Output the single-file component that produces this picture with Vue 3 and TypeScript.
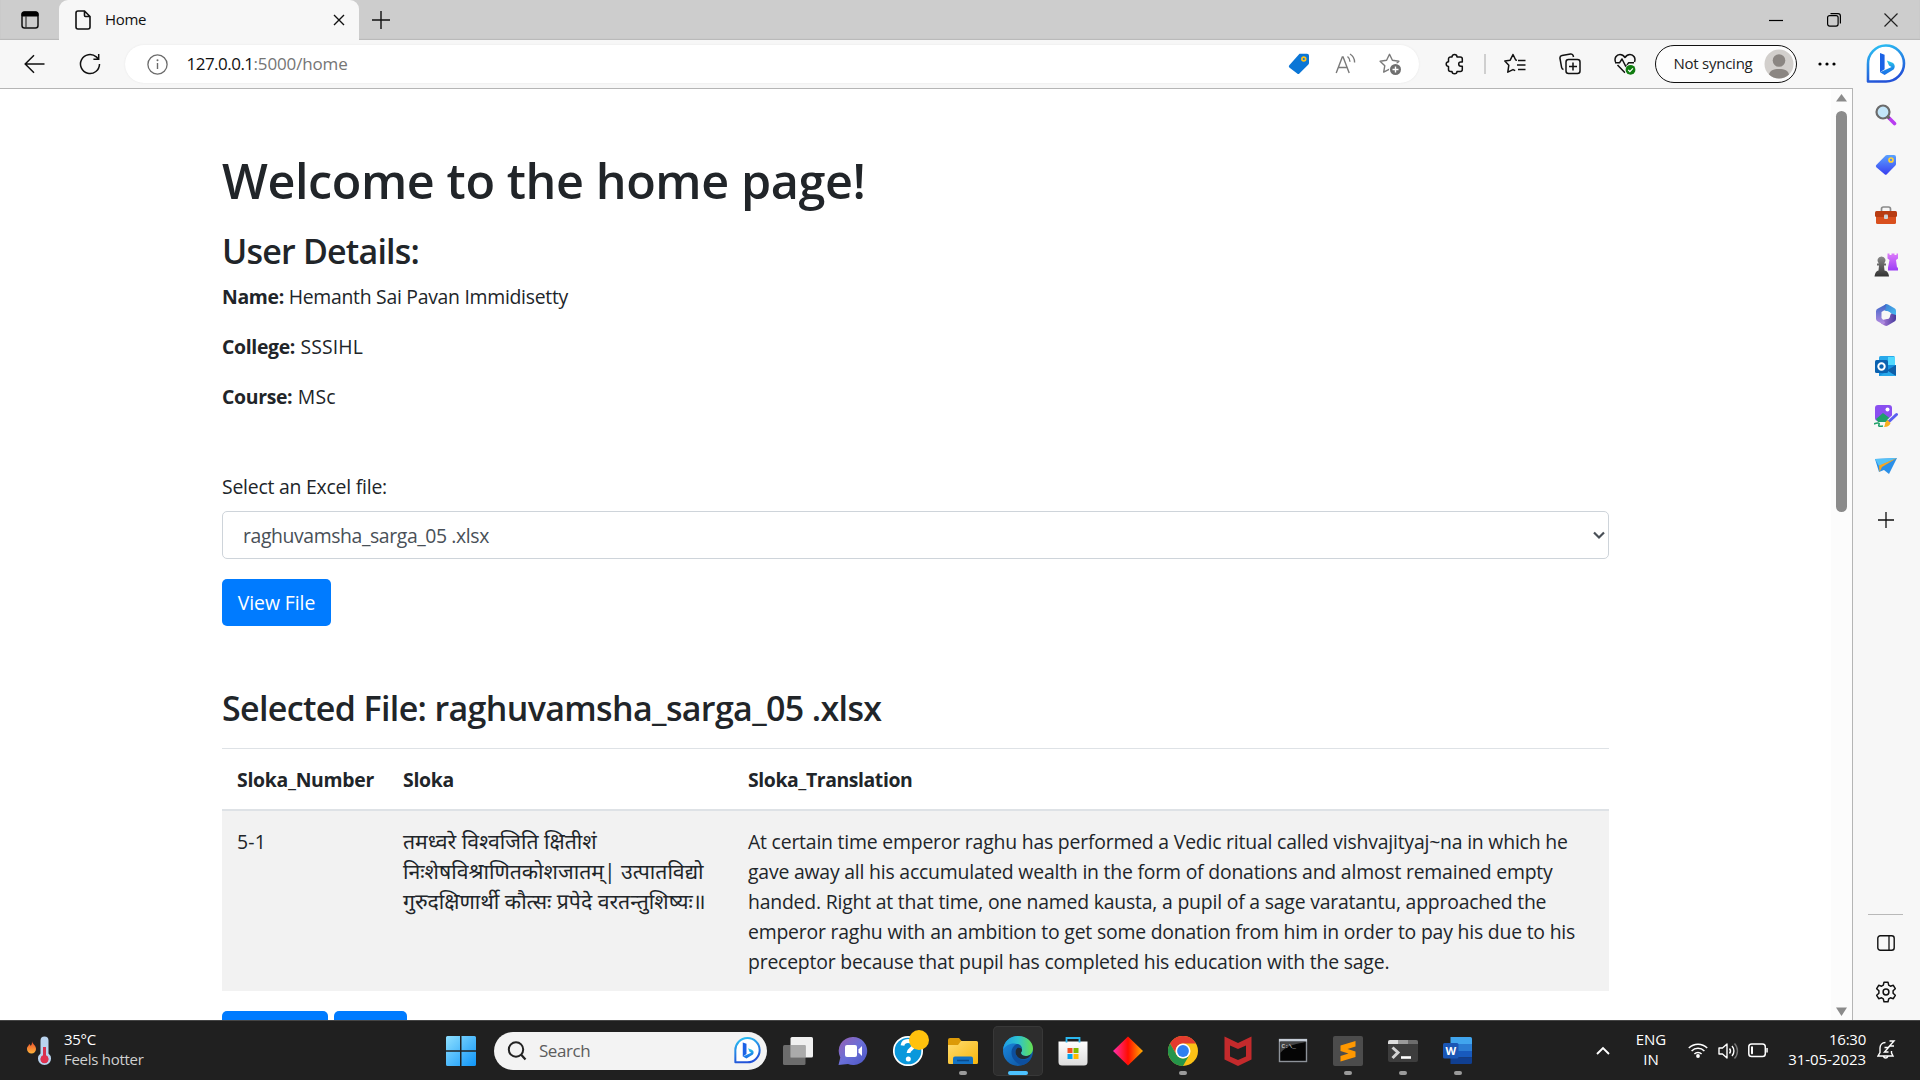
<script setup lang="ts">
interface Detail {
  label: string
  value: string
  cls?: string
}

const details: Detail[] = [
  { label: 'Name:', value: 'Hemanth Sai Pavan Immidisetty' },
  { label: 'College:', value: 'SSSIHL', cls: 'loose' },
  { label: 'Course:', value: 'MSc', cls: 'loose' },
]

const fileName = 'raghuvamsha_sarga_05 .xlsx'

const sloka: string[] = [
  'तमध्वरे विश्वजिति क्षितीशं',
  'निःशेषविश्राणितकोशजातम्| उत्पातविद्यो',
  'गुरुदक्षिणार्थी कौत्सः प्रपेदे वरतन्तुशिष्यः॥',
]

const translation: string[] = [
  'At certain time emperor raghu has performed a Vedic ritual called vishvajityaj~na in which he',
  'gave away all his accumulated wealth in the form of donations and almost remained empty',
  'handed. Right at that time, one named kausta, a pupil of a sage varatantu, approached the',
  'emperor raghu with an ambition to get some donation from him in order to pay his due to his',
  'preceptor because that pupil has completed his education with the sage.',
]
</script>

<template>
  <div class="desktop">
    <svg width="0" height="0" class="defs">
      <defs>
        <linearGradient id="gBing" x1="0" y1="0" x2="0.3" y2="1"><stop offset="0" stop-color="#2bc5f4" /><stop offset="1" stop-color="#2353d8" /></linearGradient>
        <linearGradient id="gB" x1="0" y1="0" x2="0" y2="1"><stop offset="0" stop-color="#2fd0e8" /><stop offset=".5" stop-color="#1d8fe8" /><stop offset="1" stop-color="#1b6fe8" /></linearGradient>
        <linearGradient id="gWin" x1="0" y1="0" x2="1" y2="1"><stop offset="0" stop-color="#8fe0ff" /><stop offset="1" stop-color="#0f95f8" /></linearGradient>
        <linearGradient id="gTag" x1="0" y1="0" x2="0" y2="1"><stop offset="0" stop-color="#5aa2ff" /><stop offset="1" stop-color="#3a3ff0" /></linearGradient>
        <linearGradient id="gRook" x1="0" y1="0" x2="0" y2="1"><stop offset="0" stop-color="#dd7bfa" /><stop offset="1" stop-color="#9b3df5" /></linearGradient>
        <linearGradient id="gPawn" x1="0" y1="0" x2="0" y2="1"><stop offset="0" stop-color="#8a8a8a" /><stop offset="1" stop-color="#333" /></linearGradient>
        <linearGradient id="gChat" x1="0" y1="0" x2="1" y2="1"><stop offset="0" stop-color="#9a5fb0" /><stop offset=".5" stop-color="#6a6fd8" /><stop offset="1" stop-color="#4b55c4" /></linearGradient>
        <linearGradient id="gFolder" x1="0" y1="0" x2="1" y2="1"><stop offset="0" stop-color="#ffdc70" /><stop offset="1" stop-color="#f8b60c" /></linearGradient>
        <linearGradient id="gEdgeTop" x1="0" y1="0" x2="1" y2="0"><stop offset="0" stop-color="#1f9be6" /><stop offset=".5" stop-color="#2dc3cf" /><stop offset="1" stop-color="#66e04e" /></linearGradient>
        <linearGradient id="gEdgeLow" x1="0" y1="0" x2="1" y2="1"><stop offset="0" stop-color="#1c8fe6" /><stop offset="1" stop-color="#0c4a94" /></linearGradient>
        <linearGradient id="gDia" x1="0" y1="0" x2="1" y2="0"><stop offset="0" stop-color="#ff2fb0" /><stop offset=".5" stop-color="#ff0d00" /><stop offset="1" stop-color="#ffae00" /></linearGradient>
        <linearGradient id="gStore" x1="0" y1="0" x2="0" y2="1"><stop offset="0" stop-color="#fff" /><stop offset="1" stop-color="#dcdcdc" /></linearGradient>
        <linearGradient id="gFlame" x1="0" y1="0" x2="0" y2="1"><stop offset="0" stop-color="#e8452c" /><stop offset="1" stop-color="#ffb43a" /></linearGradient>
        <linearGradient id="gM1" x1="0" y1="0" x2="0" y2="1"><stop offset="0" stop-color="#3a66c8" /><stop offset="1" stop-color="#b58be0" /></linearGradient>
        <linearGradient id="gM2" x1="0" y1="0" x2="1" y2="1"><stop offset="0" stop-color="#3c78d0" /><stop offset="1" stop-color="#48c2f4" /></linearGradient>
        <linearGradient id="gM3" x1="0" y1="0" x2="1" y2="0"><stop offset="0" stop-color="#b07fdc" /><stop offset="1" stop-color="#463a9c" /></linearGradient>
      </defs>
    </svg>

    <header class="tabstrip">
      <svg class="workspaces" width="18" height="18" viewBox="0 0 18 18"><rect x="1" y="1" width="16" height="16" rx="2.5" fill="none" stroke="#111" stroke-width="1.5" /><path d="M1 5V3a2 2 0 0 1 2-2h12a2 2 0 0 1 2 2v2z" fill="#000" stroke="#000" /><path d="M5 5v12" stroke="#333" stroke-width="1.2" /></svg>
      <div class="tab">
        <svg width="16" height="20" viewBox="0 0 16 20"><path d="M3 1h6.500l5.500 5.500V17a2 2 0 0 1-2 2H3a2 2 0 0 1-2-2V3a2 2 0 0 1 2-2zM9.500 1v4.500a1 1 0 0 0 1 1H15" fill="none" stroke="#111" stroke-width="1.600" /></svg>
        <span class="tab-title">Home</span>
        <svg width="12" height="12" viewBox="0 0 12 12"><path d="M1 1l10 10M11 1L1 11" stroke="#111" stroke-width="1.400" /></svg>
      </div>
      <svg class="newtab" width="18" height="18" viewBox="0 0 18 18"><path d="M9 0v18M0 9h18" stroke="#111" stroke-width="1.400" /></svg>
      <div class="window-controls">
        <svg width="14" height="14" viewBox="0 0 14 14"><path d="M0 7.500h14" stroke="#000" stroke-width="1.200" /></svg>
        <svg width="14" height="14" viewBox="0 0 14 14"><rect x=".6" y="2.600" width="10.500" height="10.500" rx="2" fill="none" stroke="#000" stroke-width="1.200" /><path d="M3.500.600H11a2.400 2.400 0 0 1 2.400 2.400v7.500" fill="none" stroke="#000" stroke-width="1.200" /></svg>
        <svg width="14" height="14" viewBox="0 0 14 14"><path d="M.5.500l13 13M13.500.500l-13 13" stroke="#222" stroke-width="1.200" /></svg>
      </div>
    </header>

    <nav class="toolbar">
      <svg class="back" width="21" height="20" viewBox="0 0 21 20"><path d="M20.500 10H1.500M10 1.200L1.200 10l8.800 8.800" fill="none" stroke="#111" stroke-width="1.500" /></svg>
      <svg class="reload" width="22" height="22" viewBox="0 0 22 22"><path d="M20.500 11a9.500 9.500 0 1 1-3.200-7.100L19.500 6M19.700 1v5.300h-5.300" fill="none" stroke="#111" stroke-width="1.500" /></svg>
      <div class="address">
        <svg width="21" height="21" viewBox="0 0 21 21"><circle cx="10.500" cy="10.500" r="9.600" fill="none" stroke="#6b6b6b" stroke-width="1.300" /><path d="M10.500 9v6" stroke="#6b6b6b" stroke-width="1.400" /><circle cx="10.500" cy="6.300" r="1" fill="#6b6b6b" /></svg>
        <span class="url"><span class="host">127.0.0.1</span><span class="path">:5000/home</span></span>
        <svg width="22" height="22" viewBox="0 0 22 22"><path d="M11.500.800H19a2 2 0 0 1 2 2V10a2 2 0 0 1-.6 1.400l-9 9a1.600 1.600 0 0 1-2.200 0L1.300 14.500a1.600 1.600 0 0 1 0-2.200z" fill="#0b76d6" /><circle cx="15.800" cy="6" r="1.900" fill="#0b76d6" stroke="#ffc21a" stroke-width="1.700" /></svg>
        <svg class="read" width="22" height="22" viewBox="0 0 22 22"><path d="M1.200 20L7.300 4h.8l6.100 16M3.400 14.500h8.700M12.500 3.500c1.600 1.200 2.500 2.900 2.500 5.200M15 1c2.900 1.700 4.600 4.600 4.600 8.500" fill="none" stroke="#7a7a7a" stroke-width="1.400" /></svg>
        <svg class="star" width="23" height="23" viewBox="0 0 23 23"><path d="M10.500 1.300l2.900 6 6.500.9-4.700 4.500 1.100 6.400-5.800-3-5.800 3 1.100-6.400L1.100 8.200l6.500-.9z" fill="none" stroke="#7a7a7a" stroke-width="1.400" stroke-linejoin="round" /><circle cx="16.500" cy="16.500" r="6.500" fill="#fff" /><circle cx="16.500" cy="16.500" r="5.500" fill="#6f6f6f" /><path d="M16.500 13.500v6M13.500 16.500h6" stroke="#fff" stroke-width="1.400" /></svg>
      </div>
      <svg class="ext" width="20" height="22" viewBox="0 0 20 22"><path d="M7 4C7 2.300 8.200 1.500 9.500 1.500S12 2.300 12 4h3.300a2 2 0 0 1 2 2v3h-1.500a2 2 0 0 0 0 4.200h1.500v3.300a2 2 0 0 1-2 2H12c0 1.500-1.200 2.300-2.500 2.300S7 20 7 18.500H5.500a2 2 0 0 1-2-2v-3C2.200 13.400 1.200 12.400 1.200 11.100s1-2.200 2.300-2.300V6a2 2 0 0 1 2-2z" fill="none" stroke="#111" stroke-width="1.500" stroke-linejoin="round" /></svg>
      <i class="divider"></i>
      <svg class="favs" width="22" height="22" viewBox="0 0 22 22"><path d="M13 7.200l-1.300-.2L9 1.500 6.200 7.200l-5.400.8 4 4.300-1 6.900L9 16.600l2.200 1.100M14 7.500h7.500M13 12h8.500M14 16.500h7.500" fill="none" stroke="#111" stroke-width="1.500" stroke-linejoin="round" /></svg>
      <svg class="coll" width="22" height="22" viewBox="0 0 22 22"><rect x="7" y="6.500" width="14" height="14" rx="2.500" fill="none" stroke="#111" stroke-width="1.500" /><path d="M14 9.500v8M10 13.500h8M4.500 16.500a2.600 2.600 0 0 1-1.900-2.100L1 5.500a2.500 2.500 0 0 1 2-2.900l8.500-1.500A2.500 2.500 0 0 1 14.300 3l.2 1" fill="none" stroke="#111" stroke-width="1.500" /></svg>
      <svg class="heart" width="22" height="22" viewBox="0 0 22 22"><path d="M1.500 9C0 5 2.500 1.500 6 1.500c2.100 0 3.600 1 5 3 1.400-2 2.900-3 5-3 3.500 0 6 3.500 4.500 7.500M3.500 12l7.500 7.800M1 9.800h4.500L8 6l4 7.800 2.500-4H20" fill="none" stroke="#111" stroke-width="1.500" stroke-linejoin="round" /><circle cx="16.500" cy="16.800" r="5.800" fill="#f7f7f7" /><circle cx="16.500" cy="16.800" r="4.900" fill="#107c10" /><path d="M14.200 16.900l1.700 1.700 3-3.200" fill="none" stroke="#fff" stroke-width="1.300" /></svg>
      <div class="profile">
        <span>Not syncing</span>
        <svg width="30" height="30" viewBox="0 0 30 30"><circle cx="15" cy="15" r="14.500" fill="#d2cfcc" /><circle cx="15" cy="11.500" r="6.300" fill="#8b8682" /><path d="M5 25.500C6 21.500 9 20 15 20s9 1.500 10 5.500A14.500 14.500 0 0 1 5 25.500z" fill="#8b8682" /></svg>
      </div>
      <svg class="dots" width="18" height="4" viewBox="0 0 18 4"><circle cx="2" cy="2" r="1.600" /><circle cx="9" cy="2" r="1.600" /><circle cx="16" cy="2" r="1.600" /></svg>
      <svg class="bing" width="40" height="40" viewBox="0 0 40 40"><path d="M2 37.500V20A18 18 0 1 1 20 37.500z" fill="#fff" stroke="url(#gBing)" stroke-width="2.600" stroke-linejoin="round" /><path d="M14 9l4.600 1.700v14.600l-4.600 3z" fill="#1b62e6" /><path d="M14 28.300l4.600 2.600 9-5.300c2-2.400 1.400-5.600-1.600-7l-5.200-2.200 2.200 5.200 2.600 1.300z" fill="url(#gB)" /></svg>
    </nav>

    <div class="body">
      <main class="page">
        <div class="container">
          <h1>Welcome to the home page!</h1>
          <h3 class="details-title">User Details:</h3>
          <p v-for="d in details" :key="d.label"><strong>{{ d.label }}</strong> <span class="val" :class="d.cls">{{ d.value }}</span></p>
          <div class="field-label">Select an Excel file:</div>
          <div class="select">
            <span>{{ fileName }}</span>
            <svg width="12" height="9" viewBox="0 0 12 9"><path d="M1 1.500l5 5 5-5" fill="none" stroke="#495057" stroke-width="2.200" /></svg>
          </div>
          <button class="btn">View File</button>
          <h3 class="selected-title">Selected File: {{ fileName }}</h3>
          <div class="table">
            <div class="row head">
              <span class="c1">Sloka_Number</span><span class="c2">Sloka</span><span class="c3 tr">Sloka_Translation</span>
            </div>
            <div class="row data">
              <span class="c1 num">5-1</span>
              <div class="c2 hindi"><div v-for="l in sloka" :key="l">{{ l }}</div></div>
              <div class="c3"><div v-for="l in translation" :key="l">{{ l }}</div></div>
            </div>
          </div>
          <div class="pager"><i class="p1"></i><i class="p2"></i></div>
        </div>
        <div class="scrollbar">
          <svg width="11" height="8" viewBox="0 0 11 8"><path d="M5.500 0L11 7.500H0z" fill="#8b8b8b" /></svg>
          <i class="thumb"></i>
          <svg class="down" width="11" height="9" viewBox="0 0 11 9"><path d="M0 .500h11L5.500 9z" fill="#8b8b8b" /></svg>
        </div>
      </main>

      <aside class="sidebar">
        <div class="s"><svg width="22" height="22" viewBox="0 0 22 22"><path d="M13.500 13.500l6 6" stroke="#b83df0" stroke-width="3.600" stroke-linecap="round" /><path d="M12.500 12.500l2 2" stroke="#666" stroke-width="2.500" /><circle cx="8" cy="8" r="6.500" fill="#c3e6fa" stroke="#6b6b6b" stroke-width="2.200" /></svg></div>
        <div class="s"><svg width="22" height="22" viewBox="0 0 22 22"><path d="M12 1h7a2 2 0 0 1 2 2v7a2 2 0 0 1-.6 1.400l-8.600 8.800a1.600 1.600 0 0 1-2.200 0L1.300 13.200a1.600 1.600 0 0 1 0-2.200L10.600 1.600A2 2 0 0 1 12 1z" fill="url(#gTag)" /><circle cx="16" cy="6" r="2" fill="#4f86ff" stroke="#ffd335" stroke-width="1.700" /></svg></div>
        <div class="s"><svg width="24" height="22" viewBox="0 0 24 22"><path d="M7.500 8V5a2 2 0 0 1 2-2h5a2 2 0 0 1 2 2v3" fill="none" stroke="#8a8a8a" stroke-width="1.700" /><rect x="2" y="9" width="20" height="11" rx="1.500" fill="#d9501e" /><rect x="1" y="7" width="22" height="6" rx="1.500" fill="#b83c12" /><rect x="10" y="10.500" width="4" height="4.500" rx="1" fill="#ccd2d6" /></svg></div>
        <div class="s"><svg width="24" height="24" viewBox="0 0 24 24"><path d="M13.500.500h2v1.500h2V.500h3v1.500h2V.500h1.500v5l-2 1.500 1 7.500h1v3h-10v-3l1.500-7.500-2-1.500z" fill="url(#gRook)" /><path d="M7.500 3.500a4 4 0 0 1 2.700 7H12v2h-2l.5 5c2.500.500 4 2 4.500 6H.500c.5-4 2-5.500 4-6l.5-5H3v-2h1.800a4 4 0 0 1 2.700-7z" fill="url(#gPawn)" /></svg></div>
        <div class="s"><svg width="22" height="22" viewBox="0 0 22 22"><path d="M10.500.300a3 3 0 0 1 2.500.2l6.500 3.700A3 3 0 0 1 21 6.800V13l-6.500-5-5-1.500L8 3z" fill="url(#gM2)" /><path d="M21 11v4a3 3 0 0 1-1.500 2.600l-6.800 3.900a3 3 0 0 1-3 0L6 19.500l1.500-3.500L14 14.500 16 9.500z" fill="url(#gM3)" /><path d="M11 .200L3 4.500A3 3 0 0 0 1 7.200v7.500a3 3 0 0 0 1.500 2.600L7 19.800c1.500.6 3 0 3-1.500L6.500 14V8l4-2.500z" fill="url(#gM1)" /><circle cx="11" cy="11" r="4" fill="#f7f7f7" /></svg></div>
        <div class="s"><svg width="22" height="22" viewBox="0 0 22 22"><rect x="4" y="1" width="16" height="10" rx="1.500" fill="#28a8ea" /><path d="M13 2h7v8h-7z" fill="#50d9ff" /><path d="M4 10h17v9.500a1.500 1.500 0 0 1-1.500 1.500H4z" fill="#1490df" /><path d="M21 10l-10 6 10 5z" fill="#0f5fa8" /><path d="M4 21l17 0-8-5z" fill="#28a8ea" /><rect x="0" y="5" width="13" height="13" rx="1.500" fill="#0a62b0" /><circle cx="6.500" cy="11.500" r="3.200" fill="none" stroke="#fff" stroke-width="2" /></svg></div>
        <div class="s"><svg width="24" height="24" viewBox="0 0 24 24"><rect x="1" y="1" width="17" height="16" rx="3" fill="#8a4ff0" /><path d="M2 15l7-6 9 7-3 2H4z" fill="#1fa06a" /><circle cx="13.500" cy="5.500" r="2" fill="#fff" /><path d="M22.500 10.500l-7.500 7" stroke="#f7f7f7" stroke-width="5" /><path d="M22.500 10.500l-7.500 7" stroke="#5b5ff0" stroke-width="3" stroke-linecap="round" /><path d="M13.500 16l3 3c-1 3.500-4 4-6.500 4 1.500-2 .5-5.500 3.500-7z" fill="#f8b020" /><path d="M0 20c3-1.500 6-1.500 5 .5s1 2 4 1.500" fill="none" stroke="#1fa06a" stroke-width="1.600" /></svg></div>
        <div class="s"><svg width="24" height="20" viewBox="0 0 24 20"><path d="M1 3l22-1-8 16-5-4-5 2z" fill="#2b8fe8" /><path d="M1 3l22-1L5 10z" fill="#57c2f7" /><path d="M5 9.500L23 2 8 11l-2.500 5z" fill="#f5a623" /></svg></div>
        <div class="s plus"><svg width="16" height="16" viewBox="0 0 16 16"><path d="M8 0v16M0 8h16" stroke="#111" stroke-width="1.300" /></svg></div>
        <div class="s-bottom">
          <i class="s-line"></i>
          <svg class="panel" width="18" height="16" viewBox="0 0 18 16"><rect x=".8" y=".8" width="16.400" height="14.400" rx="2.500" fill="none" stroke="#111" stroke-width="1.400" /><path d="M12 1v14" stroke="#111" stroke-width="1.300" /></svg>
          <svg class="gear" width="22" height="22" viewBox="0 0 22 22"><path d="M9 1.200h4l.7 3 1.700 1 2.900-.9 2 3.400-2.200 2.100v2.400l2.200 2.100-2 3.400-2.900-.9-1.700 1-.7 3H9l-.7-3-1.700-1-2.900.9-2-3.400 2.200-2.100V9.800L1.700 7.700l2-3.400 2.900.9 1.700-1z" fill="none" stroke="#111" stroke-width="1.500" stroke-linejoin="round" /><circle cx="11" cy="11" r="2.900" fill="none" stroke="#111" stroke-width="1.500" /></svg>
        </div>
      </aside>
    </div>

    <footer class="taskbar">
      <div class="weather">
        <svg width="26" height="30" viewBox="0 0 26 30"><path d="M6 5c0 3 4 4 4 8a4.500 4.500 0 0 1-9 0c0-3 2-3 2-5 1 .5 1.500 1 1.500 2C6 9 6 7 6 5z" fill="url(#gFlame)" /><path d="M14.500 4.500a4 4 0 0 1 8 0v13a6.500 6.500 0 1 1-8 0z" fill="#b9d3ee" /><path d="M17 11h3v8.500a4 4 0 1 1-3 0z" fill="#d6304d" /><circle cx="18.500" cy="23" r="3.800" fill="#e0314f" /></svg>
        <div class="two"><span>35°C</span><span class="dim">Feels hotter</span></div>
      </div>
      <svg class="start" width="30" height="30" viewBox="0 0 30 30"><path d="M1.500 0H14v14.200H0V1.500A1.500 1.500 0 0 1 1.500 0zM15.500 0h13A1.500 1.500 0 0 1 30 1.500v12.700H15.500zM0 15.700h14V30H1.500A1.500 1.500 0 0 1 0 28.500zM15.500 15.700H30v12.800a1.500 1.500 0 0 1-1.500 1.500h-13z" fill="url(#gWin)" /></svg>
      <div class="search">
        <svg width="20" height="20" viewBox="0 0 20 20"><circle cx="9" cy="8.500" r="7.200" fill="none" stroke="#222" stroke-width="2" /><path d="M14 13.500l4.500 5" stroke="#222" stroke-width="2.200" /></svg>
        <span>Search</span>
        <svg width="27" height="27" viewBox="0 0 40 40"><path d="M2 37.500V20A18 18 0 1 1 20 37.500z" fill="#fff" stroke="url(#gBing)" stroke-width="3" stroke-linejoin="round" /><path d="M13 8l5.500 2v15l-5.500 4z" fill="#1b62e6" /><path d="M13 29l5.500 3 9.500-6c2-2.400 1.400-5.600-1.600-7l-5.600-2.400 2.200 5.400 2.600 1.300z" fill="url(#gB)" /></svg>
      </div>
      <div class="apps">
        <div class="app"><svg width="30" height="30" viewBox="0 0 30 30"><rect x="7.500" y="1" width="22.500" height="20.500" rx="1.500" fill="#f0f0f0" /><rect x="0" y="9" width="22.500" height="20" rx="1.500" fill="#747474" opacity=".9" /><path d="M7.500 9h15v12.500h-15z" fill="#aaa" /></svg></div>
        <div class="app"><svg width="30" height="30" viewBox="0 0 30 30"><path d="M15 1a14 14 0 1 1-5 27L.5 29l1.800-7.500A14 14 0 0 1 15 1z" fill="url(#gChat)" /><rect x="7" y="9" width="12" height="12" rx="2" fill="#fff" /><path d="M20.500 13.500L24 10v10l-3.500-3.500z" fill="#fff" /></svg></div>
        <div class="app"><svg class="help" width="36" height="36" viewBox="0 0 36 36"><circle cx="15" cy="21" r="14.200" fill="#0a98dc" stroke="#fff" stroke-width="1.700" /><path d="M9.500 15.500c.5-3.500 3-4.500 5.500-4.500 3.500 0 5.500 2 5.500 4.500 0 3.500-5 3.700-5 7.500" fill="none" stroke="#fff" stroke-width="3.800" /><circle cx="15.300" cy="29" r="2.500" fill="#fff" /><circle cx="26" cy="10" r="10" fill="#ffc10d" /></svg></div>
        <div class="app"><svg width="30" height="30" viewBox="0 0 30 30"><path d="M0 4a2 2 0 0 1 2-2h9l3 3.500V12H0z" fill="#dc9a08" /><path d="M0 9h10l3-4h15.500A1.500 1.500 0 0 1 30 6.500v20a1.500 1.500 0 0 1-1.500 1.500h-27A1.500 1.500 0 0 1 0 26.500z" fill="url(#gFolder)" /><path d="M5 28v-5.500a2 2 0 0 1 2-2h16a2 2 0 0 1 2 2V28z" fill="#1272c4" /><path d="M9 24.500h12" stroke="#0a4b8c" stroke-width="1.500" /></svg><i class="dot"></i></div>
        <div class="app active"><svg width="30" height="30" viewBox="0 0 30 30"><circle cx="15" cy="15" r="15" fill="url(#gEdgeLow)" /><path d="M0 14C1 5 7 0 15 0c9 0 15 6 15 12.500 0 4.500-3 7.500-7 7.500-3.500 0-5-1.500-5-3 0-1 1-1.500 1-3.500 0-3-3-6-8-6C6 7.500 2 10 0 14z" fill="url(#gEdgeTop)" /><path d="M14 8c-5 2-7.500 9-3.500 15 2 3 5 5.500 9 6 4-1 7-3.500 8.500-6.500-7 3.500-15.500.5-15.500-6.500 0-2 1-3.500 2.500-4.500 3-.5 4 1 4 3 .5-4-2-6.500-5-6.500z" fill="#0d4f9e" /><path d="M15 11.500c2.500 0 4 1 4 2.500 0 1.500-1 2-1 3 0 1.500 1.500 3 5 3 2 0 3.500-.5 5-2-1 3-4 5-8 5-4.500 0-7.500-3.500-7.500-7 0-2 1-3.500 2.500-4.500z" fill="#222b33" /></svg><i class="dot on"></i></div>
        <div class="app"><svg width="30" height="30" viewBox="0 0 30 30"><path d="M.5 5.500h29V26a3.500 3.500 0 0 1-3.500 3.500H4A3.500 3.500 0 0 1 .5 26z" fill="url(#gStore)" /><path d="M8.500 6.500V2h13v4.500" fill="none" stroke="#2bb7ee" stroke-width="1.800" /><path d="M9.500 12h5v5h-5z" fill="#f25022" /><path d="M15.500 12h5v5h-5z" fill="#7fba00" /><path d="M9.500 18h5v5h-5z" fill="#00a4ef" /><path d="M15.500 18h5v5h-5z" fill="#ffb900" /></svg></div>
        <div class="app"><svg width="30" height="30" viewBox="0 0 30 30"><path d="M15 .500L30 15 15 29.500 0 15z" fill="url(#gDia)" /></svg></div>
        <div class="app"><svg width="30" height="30" viewBox="0 0 30 30"><circle cx="15" cy="15" r="15" fill="#fbc116" /><path d="M2 7.500A15 15 0 0 1 28 7.500H15a7.500 7.500 0 0 0-6.500 11.200z" fill="#e33b2e" /><path d="M2 7.500a15 15 0 0 0 13 22.500l6.500-11.200a7.500 7.500 0 0 1-13 0z" fill="#25954a" /><circle cx="15" cy="15" r="7.500" fill="#fff" /><circle cx="15" cy="15" r="5.900" fill="#2f7ff0" /></svg><i class="dot"></i></div>
        <div class="app"><svg width="30" height="30" viewBox="0 0 30 30"><path d="M1.500.500L15 7 28.500.500v23L15 30 1.500 23.500zM7 9.500v11l8 3.500 8-3.500v-11l-8 3.500z" fill="#c42a2c" fill-rule="evenodd" /></svg></div>
        <div class="app"><svg width="30" height="30" viewBox="0 0 30 30"><rect x="1.500" y="3.500" width="27" height="22" fill="#050505" stroke="#8d9299" stroke-width="1.400" /><path d="M1 3h28v2.500H1z" fill="#c5ccd6" /><path d="M2.200 6h25.500C20 8 10 8 2.200 17z" fill="#444" /><text x="3.500" y="11.500" font-size="6" fill="#eee" font-family="Liberation Mono">C:\_</text></svg></div>
        <div class="app"><svg width="30" height="30" viewBox="0 0 30 30"><rect width="30" height="30" rx="2" fill="#4c4c4c" /><path d="M22.500 5v5.500l-8 2.500 8 2.500V21L7.500 25.500V20l8-2.500-8-2.500V9.500z" fill="#ff9800" /></svg><i class="dot"></i></div>
        <div class="app"><svg width="30" height="30" viewBox="0 0 30 30"><rect y="4" width="30" height="22" rx="2" fill="#3d3d3d" /><path d="M0 8V6a2 2 0 0 1 2-2h8v4z" fill="#ddd" /><path d="M10 4h10v4H10z" fill="#9a9a9a" /><path d="M20 4h8a2 2 0 0 1 2 2v2H20z" fill="#6d6d6d" /><path d="M4.500 11.500l5.500 5-5.500 5.500" fill="none" stroke="#d2d2d2" stroke-width="3" /><path d="M13 21.500h10" stroke="#fff" stroke-width="2.600" /></svg><i class="dot"></i></div>
        <div class="app"><svg width="30" height="30" viewBox="0 0 30 30"><path d="M7.500 1h20A1.500 1.500 0 0 1 29 2.500V8H7.500z" fill="#41a5ee" /><path d="M7.500 8H29v7H7.500z" fill="#2b7cd3" /><path d="M7.500 15H29v6.500H7.500z" fill="#185abd" /><path d="M7.500 21.500H29v5a1.500 1.500 0 0 1-1.500 1.500h-20z" fill="#103f91" /><rect x="0" y="7" width="15.500" height="15.500" rx="1.500" fill="#1a56b5" /><text x="7.700" y="18.500" font-size="11" font-weight="700" fill="#fff" text-anchor="middle" font-family="Open Sans">W</text></svg><i class="dot"></i></div>
      </div>
      <div class="tray">
        <svg class="chev" width="14" height="9" viewBox="0 0 14 9"><path d="M1 8l6-6 6 6" fill="none" stroke="#fff" stroke-width="1.900" /></svg>
        <div class="two lang"><span>ENG</span><span>IN</span></div>
        <svg class="wifi" width="20" height="16" viewBox="0 0 20 16"><path d="M.8 6a13 13 0 0 1 18.400 0M3.600 9a9 9 0 0 1 12.800 0M6.400 12a5 5 0 0 1 7.200 0" fill="none" stroke="#fff" stroke-width="1.500" /><circle cx="10" cy="14" r="1.900" fill="#fff" /></svg>
        <svg class="vol" width="21" height="18" viewBox="0 0 21 18"><path d="M1 6h3.500L9 2v14l-4.500-4H1z" fill="none" stroke="#fff" stroke-width="1.400" stroke-linejoin="round" /><path d="M11.500 6.500a4 4 0 0 1 0 5M14 4a7.500 7.500 0 0 1 0 10" fill="none" stroke="#fff" stroke-width="1.400" /><path d="M16.500 1.500a11 11 0 0 1 0 15" fill="none" stroke="#777" stroke-width="1.400" /></svg>
        <svg class="bat" width="21" height="15" viewBox="0 0 21 15"><rect x=".8" y="1" width="16.500" height="12.500" rx="2.800" fill="none" stroke="#fff" stroke-width="1.500" /><path d="M3.500 3.800H4.500v7H3.500z" fill="#fff" stroke="#fff" /><path d="M18.300 5h1.500v4.500h-1.500z" fill="#fff" /></svg>
        <div class="two clock"><span class="time">16:30</span><span>31-05-2023</span></div>
        <svg class="bell" width="19" height="20" viewBox="0 0 19 20"><path d="M8.500 2.500C5 2.500 3 5 3 8v4.500L1 16h15l-1.500-3v-2M6.500 16.500a2.300 2.300 0 0 0 4.300 0" fill="none" stroke="#fff" stroke-width="1.400" /><path d="M12.500 1h4.500l-4.500 5h4.500M7.500 7.500h4l-4 4.500h4" fill="none" stroke="#fff" stroke-width="1.400" /></svg>
      </div>
    </footer>
  </div>
</template>

<style scoped>
.desktop { width: 1920px; height: 1080px; display: flex; flex-direction: column; overflow: hidden; font-family: "Open Sans", "Noto Sans", sans-serif; background: #fff; color: #212529; }
.desktop svg { flex: none; display: block; }
.defs { position: absolute; }

.tabstrip { height: 40px; flex: none; display: flex; background: #cdcdcd; box-shadow: inset 0 -1px 1px #b9b9b9; box-sizing: border-box; }
.workspaces { margin: 11px 20px 0 21px; }
.tab { width: 300px; height: 40px; box-sizing: border-box; padding: 0 14px 0 16px; display: flex; align-items: center; background: #f7f7f7; border-radius: 9px 9px 0 0; }
.tab-title { flex: 1; margin: -2px 0 0 14px; font-size: 15px; letter-spacing: -0.35px; color: #111; line-height: 20px; }
.newtab { margin: 11px 0 0 13px; }
.window-controls { margin-left: auto; margin-right: 22px; display: flex; gap: 43.500px; align-items: center; }

.toolbar { height: 48px; flex: none; box-sizing: border-box; display: flex; align-items: center; background: #f7f7f7; }
.back { margin-left: 24px; }
.reload { margin: 0 24px 0 34px; }
.address { width: 1294px; height: 38px; border-radius: 19px; background: #fff; box-shadow: 0 0 2px #e4e4e4; display: flex; align-items: center; padding: 0 17px 0 22px; box-sizing: border-box; }
.url { flex: 1; margin-left: 18.500px; font-size: 17px; line-height: 24px; }
.host { color: #111; letter-spacing: -0.52px; }
.path { color: #757575; letter-spacing: -0.15px; }
.read { margin: 0 22px 0 25px; }
.star { margin-right: 0; }
.ext { margin-left: 26px; }
.divider { width: 1.500px; height: 20px; background: #cfcfcf; margin: 0 18px 0 19px; }
.coll { margin-left: 33px; }
.heart { margin-left: 33px; }
.profile { width: 142px; height: 38px; box-sizing: border-box; margin-left: 19px; border: 1.500px solid #111; border-radius: 19px; display: flex; align-items: center; justify-content: space-between; padding: 0 2px 0 18px; background: #fdfdfd; font-size: 15px; letter-spacing: -0.25px; color: #222; }
.profile span { margin-top: -2px; white-space: nowrap; }
.dots { margin-left: 21px; }
.bing { margin-left: 30px; }

.body { flex: none; height: 932px; display: flex; overflow: hidden; }
.page { width: 1853px; box-sizing: border-box; border-top: 1px solid #b5b5b5; border-right: 1px solid #b5b5b5; height: 932px; display: flex; overflow: hidden; }
.container { width: 1387px; margin-left: 222px; padding-top: 61px; flex: none; }
h1 { margin: 0; font-size: 48.500px; font-weight: 600; line-height: 60px; letter-spacing: -0.4px; }
h3 { margin: 0; font-size: 34px; font-weight: 600; line-height: 42px; letter-spacing: -0.64px; }
.details-title { margin: 20px 0 9.500px; letter-spacing: -0.8px; }
p { margin: 0 0 20px; font-size: 19.400px; line-height: 30px; letter-spacing: -0.28px; white-space: nowrap; }
strong { font-weight: 700; letter-spacing: -0.32px; }
.loose { letter-spacing: 0.1px; margin-left: 0.800px; }
.field-label { margin-top: 60px; font-size: 19.400px; line-height: 30px; letter-spacing: -0.22px; }
.select { margin-top: 9px; height: 48px; box-sizing: border-box; border: 1px solid #ced4da; border-radius: 5px; display: flex; align-items: center; justify-content: space-between; padding: 2px 3px 0 20px; font-size: 19.400px; letter-spacing: -0.4px; color: #495057; }
.btn { display: block; margin: 20px 0 0; width: 109px; height: 47px; border: 0; border-radius: 5px; background: #007bff; color: #fff; font: 19.400px "Open Sans", sans-serif; letter-spacing: -0.06px; padding: 1px 0 0; }
.selected-title { margin-top: 61px; white-space: nowrap; }
.table { margin-top: 19px; border-top: 1px solid #dee2e6; font-size: 19.400px; line-height: 30px; }
.row { display: flex; padding: 15px 0; white-space: nowrap; }
.head { font-weight: 700; letter-spacing: -0.28px; border-bottom: 2px solid #dee2e6; padding-top: 16px; padding-bottom: 14px; }
.data { background: #f2f2f2; height: 149px; padding: 16px 0 15px; letter-spacing: -0.2px; }
.c1 { width: 166px; padding-left: 15px; }
.num { letter-spacing: 0.2px; }
.c2 { width: 345px; }
.tr { letter-spacing: -0.4px; }
.hindi { font-size: 21.200px; letter-spacing: 0; margin-top: -1px; }
.pager { display: flex; gap: 6px; margin-top: 20px; }
.pager i { height: 47px; border-radius: 5px; background: #007bff; }
.p1 { width: 106px; }
.p2 { width: 73px; }
.scrollbar { margin-left: auto; width: 21px; background: #fcfcfc; display: flex; flex-direction: column; align-items: center; padding: 5px 0 4px; box-sizing: border-box; height: 931px; }
.thumb { width: 11px; height: 401px; border-radius: 6px; background: #8b8b8b; margin-top: 9px; }
.down { margin-top: auto; }

.sidebar { flex: 1; background: #f7f7f7; display: flex; flex-direction: column; align-items: center; box-sizing: border-box; padding: 2px 1.500px 0 0; }
.s { height: 50.100px; display: flex; align-items: center; flex: none; }
.plus { margin-top: 4px; }
.s-bottom { margin-top: auto; display: flex; flex-direction: column; align-items: center; padding-bottom: 17px; }
.s-line { width: 35px; height: 1px; background: #b9b9b9; margin-bottom: 20px; }
.gear { margin-top: 30px; }

.taskbar { height: 60px; flex: none; background: #202020; border-top: 1px solid #454545; box-sizing: border-box; display: flex; align-items: center; color: #fff; font-size: 15px; }
.weather { width: 446px; display: flex; align-items: center; padding-left: 26px; box-sizing: border-box; }
.two { display: flex; flex-direction: column; line-height: 20px; letter-spacing: -0.28px; margin-top: -4px; white-space: nowrap; }
.weather .two { margin-left: 12px; }
.dim { color: #d0d0d0; }
.search { margin-left: 18px; width: 273px; height: 38px; border-radius: 19px; background: #f3f3f3; display: flex; align-items: center; padding: 0 6px 0 13px; box-sizing: border-box; }
.search span { flex: 1; margin-left: 12px; font-size: 17px; letter-spacing: -0.45px; color: #5c5c5c; }
.apps { display: flex; margin-left: 6px; }
.app { width: 50px; height: 50px; margin-right: 5px; display: flex; align-items: center; justify-content: center; position: relative; border-radius: 5px; }
.help { margin: -6px -6px 0 0; }
.active { background: #2d2d2d; box-shadow: inset 0 0 0 1px #383838; }
.dot { position: absolute; bottom: 1px; left: 21px; width: 8px; height: 4px; border-radius: 2px; background: #9a9a9a; }
.dot.on { left: 15px; width: 20px; background: #4cc2ff; }
.tray { margin-left: auto; display: flex; align-items: center; padding-right: 24px; }
.lang { align-items: center; width: 30px; margin-left: 26px; margin-right: 22px; letter-spacing: 0; }
.wifi { margin-top: -2px; }
.vol { margin-left: 10px; }
.bat { margin-left: 9px; }
.clock { width: 78px; margin-left: 19px; align-items: flex-end; letter-spacing: -0.05px; }
.time { letter-spacing: -0.25px; }
.bell { margin-left: 11px; margin-top: -1px; }
</style>
<style>
body { overflow: hidden; }
</style>
